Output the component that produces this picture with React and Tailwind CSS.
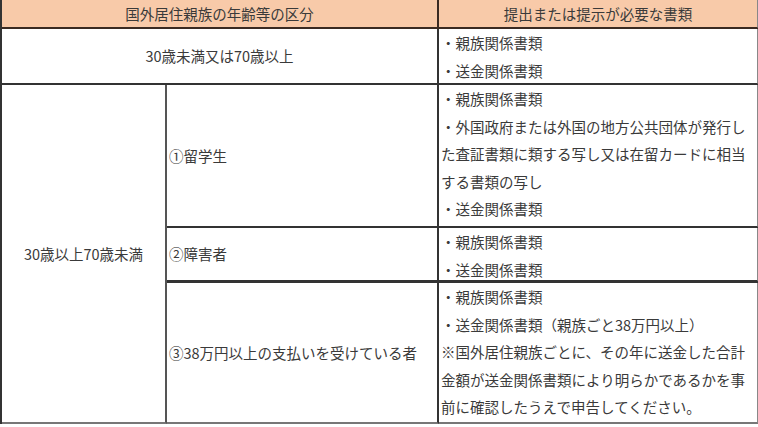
import React from 'react';

const rows = [
  {
    label: '①留学生',
    docs: [
      '・親族関係書類',
      '・外国政府または外国の地方公共団体が発行し',
      'た査証書類に類する写し又は在留カードに相当',
      'する書類の写し',
      '・送金関係書類',
    ],
    border: 'border-b-2',
  },
  {
    label: '②障害者',
    docs: ['・親族関係書類', '・送金関係書類'],
    border: 'border-b-[3px]',
  },
  {
    label: '③38万円以上の支払いを受けている者',
    docs: [
      '・親族関係書類',
      '・送金関係書類（親族ごと38万円以上）',
      '※国外居住親族ごとに、その年に送金した合計',
      '金額が送金関係書類により明らかであるかを事',
      '前に確認したうえで申告してください。',
    ],
    border: 'border-b-2 border-b-[#777]',
  },
];

function DocList({ docs }) {
  return (
    <div className="flex flex-col pl-[2px] leading-[27.5px] whitespace-nowrap">
      {docs.map((d, i) => (
        <span key={i}>{d}</span>
      ))}
    </div>
  );
}

export default function App() {
  return (
    <div
      className="w-[758px] h-[427px] bg-white text-[#3a3a3a] text-[14.5px]"
      style={{ fontFamily: '"Noto Sans CJK JP", "Noto Sans", sans-serif' }}
    >
      <div className="grid w-[757px] grid-cols-[165px_272px_320px] grid-rows-[29px_56px_143px_55px_141px] border-l-2 border-[#333]">
        {/* header */}
        <div className="col-span-2 flex items-center justify-center bg-[#f8caa9] border-b-2 border-r-2 border-[#3a2a22]">
          国外居住親族の年齢等の区分
        </div>
        <div className="flex items-center justify-center bg-[#f8caa9] border-b-2 border-r-2 border-[#3a2a22] border-r-[#888]">
          提出または提示が必要な書類
        </div>

        {/* under 30 or 70+ */}
        <div className="col-span-2 flex items-center justify-center border-b-2 border-r-2 border-[#333]">
          30歳未満又は70歳以上
        </div>
        <div className="border-b-2 border-r-2 border-[#333] border-r-[#888]">
          <DocList docs={['・親族関係書類', '・送金関係書類']} />
        </div>

        {/* 30 to 70 */}
        <div className="row-span-3 flex items-center justify-center border-b-2 border-r-2 border-[#555] border-b-[#777]">
          30歳以上70歳未満
        </div>
        {rows.map((r) => (
          <React.Fragment key={r.label}>
            <div className={`flex items-center pl-[2px] border-r-2 border-[#333] ${r.border}`}>
              {r.label}
            </div>
            <div className={`border-r-2 border-[#333] border-r-[#888] ${r.border}`}>
              <DocList docs={r.docs} />
            </div>
          </React.Fragment>
        ))}
      </div>
    </div>
  );
}
